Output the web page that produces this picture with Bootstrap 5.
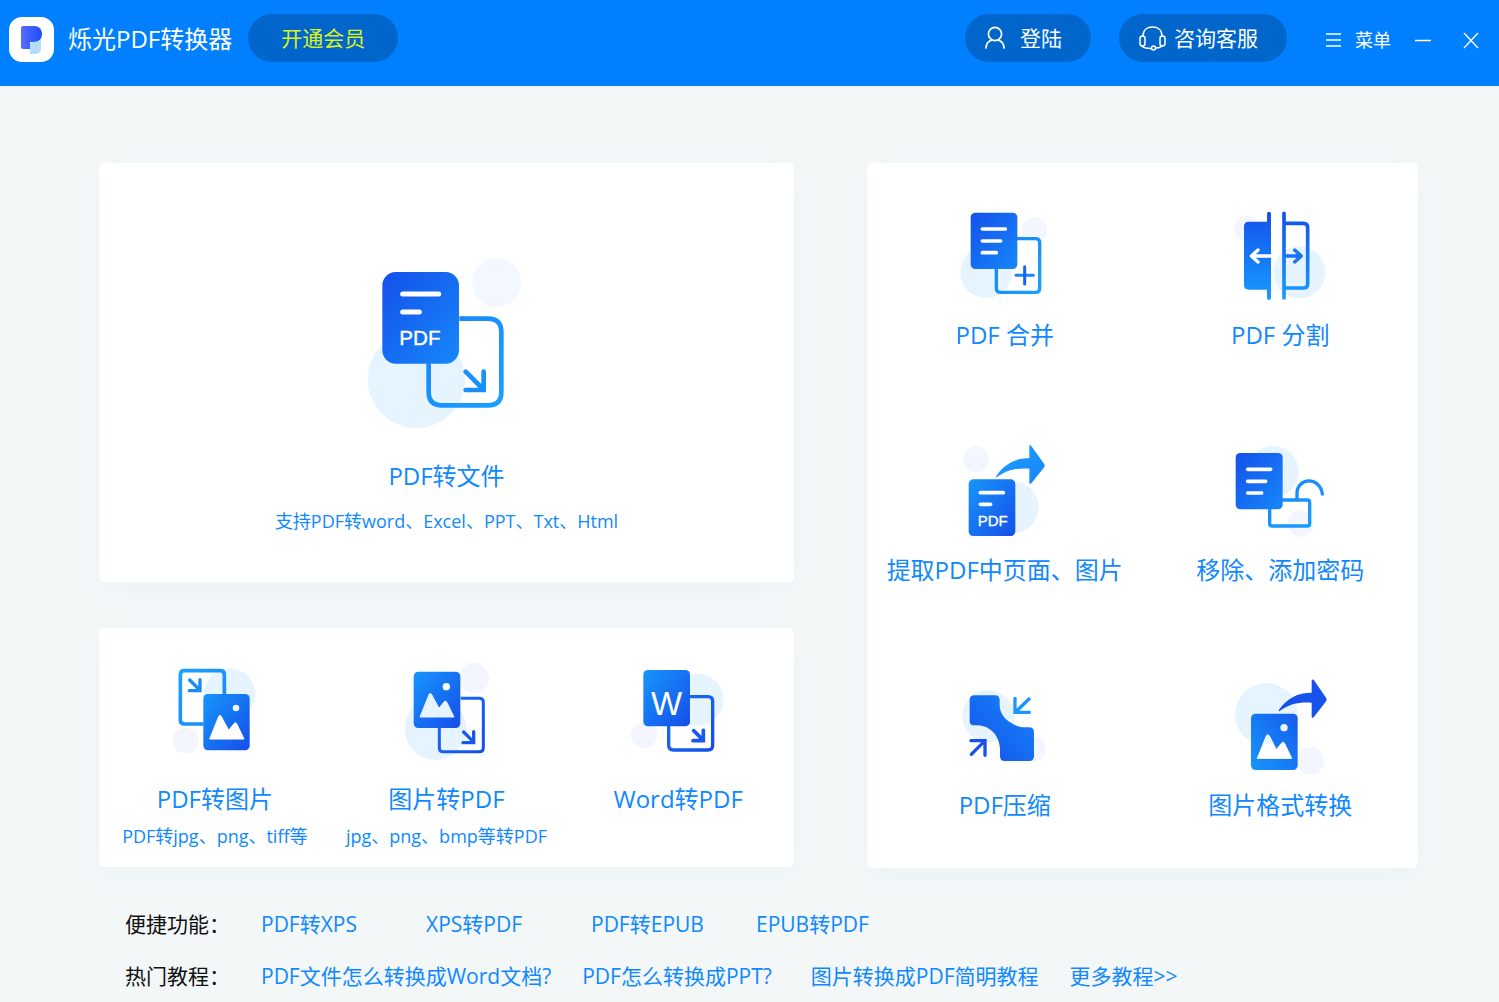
<!DOCTYPE html>
<html lang="zh-CN">
<head>
<meta charset="utf-8">
<meta name="viewport" content="width=device-width, initial-scale=1">
<title>烁光PDF转换器</title>
<link href="https://cdn.jsdelivr.net/npm/bootstrap@5.3.0/dist/css/bootstrap.min.css" rel="stylesheet">
<style>
  body { background: #f3f7f8; font-family: "Open Sans", "Noto Sans CJK SC", sans-serif; color: #111; }
  svg { display: block; flex: none; }
  a { text-decoration: none; color: #1088ff; }
  .topbar { background: #0080ff; height: 86px; padding: 14px 20px 0 9px; color: #fff; }
  .app-logo { margin-top: 3px; }
  .app-name { font-size: 24px; line-height: 50px; font-weight: 400; margin: 0 16px 0 14px; }
  .pill { background: #0066cc; height: 48px; border-radius: 24px; border: 0; color: #fff; font-size: 21px; line-height: 48px; padding: 0 0 0 20px; }
  .pill:hover { background: #005bb8; color: #fff; }
  .pill-vip, .pill-vip:hover { width: 150px; padding: 0; color: #d9f21c; }
  .pill-login { width: 126px; gap: 15px; }
  .pill-help { width: 168px; margin-left: 28px; }
  .win-btn { background: none; border: 0; color: #fff; padding: 0; font-size: 18px; line-height: 48px; margin-top: 2px; }
  .menu-btn { gap: 11px; margin-left: 37px; }
  .board { padding: 77px 81px 0 99px; gap: 73px; }
  .col-left { flex: 695 1 0; gap: 46px; }
  .col-right { flex: 551 1 0; }
  .panel { background: #fff; border-radius: 5px; box-shadow: 0 8px 24px rgba(200, 220, 240, .12); }
  .panel-main { padding: 77px 0 47px; }
  .panel-row { padding: 22px 0 17px; }
  .tile-title { font-size: 24px; line-height: 36px; white-space: nowrap; }
  .tile-note { font-size: 18px; line-height: 28px; white-space: nowrap; }
  .panel-main .tile-title { margin: 18px 0 13px; }
  .panel-row .tile-title { margin: 11px 0 5px; }
  .tool { padding: 32px 0 45px; }
  .tool .tile-title { margin-top: 2px; }
  .quick { padding: 40px 81px 10px 125px; font-size: 21px; line-height: 32px; }
  .quick-label { width: 136px; flex: none; }
  .quick-item { width: 165px; }
  .quick-links { gap: 31px; }
</style>
</head>
<body>
<svg width="0" height="0" class="position-absolute" aria-hidden="true">
  <defs>
    <linearGradient id="gDark" x1="0" y1="0" x2="1" y2="1"><stop offset="0" stop-color="#1550ea"/><stop offset="1" stop-color="#1688fa"/></linearGradient>
    <linearGradient id="gLight" x1="0" y1="0" x2="1" y2="1"><stop offset="0" stop-color="#1796fb"/><stop offset="1" stop-color="#154eea"/></linearGradient>
    <linearGradient id="gDown" x1="0" y1="0" x2="0" y2="1"><stop offset="0" stop-color="#1452ea"/><stop offset="1" stop-color="#189cff"/></linearGradient>
    <linearGradient id="gLine" x1="0" y1="0" x2="1" y2="1"><stop offset="0" stop-color="#1784fa"/><stop offset="1" stop-color="#1aa0ff"/></linearGradient>
    <linearGradient id="gLineTop" x1="0" y1="0" x2="1" y2="1"><stop offset="0" stop-color="#1ca2ff"/><stop offset="1" stop-color="#1784fa"/></linearGradient>
    <linearGradient id="gLineDeep" x1="0" y1="0" x2="1" y2="1"><stop offset="0" stop-color="#1870f6"/><stop offset="1" stop-color="#154eea"/></linearGradient>
    <linearGradient id="gUp" x1="0" y1="1" x2="1" y2="0"><stop offset="0" stop-color="#1796fb"/><stop offset="1" stop-color="#155cec"/></linearGradient>
    <linearGradient id="gPinch" x1="0" y1="1" x2="1" y2="0"><stop offset="0" stop-color="#1550ea"/><stop offset="1" stop-color="#1688fa"/></linearGradient>
    <linearGradient id="gLogo" x1="0" y1="0" x2="1" y2="0"><stop offset="0" stop-color="#5b6cff"/><stop offset="1" stop-color="#1b4dff"/></linearGradient>
  </defs>
</svg>

<header class="topbar d-flex align-items-start">
  <svg class="app-logo" width="45" height="45" viewBox="0 0 45 45" aria-hidden="true">
    <rect width="45" height="45" rx="13" fill="#fff"/>
    <path d="M12 11q0-2 2-2h11c5 0 8 3 8 8s-3 8-8 8h-4v7h-7q-2 0-2-2z" fill="url(#gLogo)"/>
    <path d="M21 28q0-3 3-3h2q4 0 6-3v9q0 6-6 6h-5z" fill="#b4dcff"/>
  </svg>
  <h1 class="app-name">烁光PDF转换器</h1>
  <button type="button" class="btn pill pill-vip">开通会员</button>

  <button type="button" class="btn pill pill-login ms-auto d-flex align-items-center">
    <svg width="20" height="24" viewBox="0 0 20 24" fill="none" stroke="#fff" stroke-width="1.7" stroke-linecap="round" aria-hidden="true"><circle cx="10" cy="8" r="6.6"/><path d="M1 22c0-5 3-7 6-8M19 22c0-5-3-7-6-8"/></svg>登陆</button>
  <button type="button" class="btn pill pill-help d-flex align-items-center gap-2">
    <svg width="27" height="26" viewBox="0 0 27 26" fill="none" stroke="#fff" stroke-width="1.5" stroke-linecap="round" aria-hidden="true"><path d="M4 11C4 5 8 2 13.500 2S23 5 23 11"/><rect x="1" y="11" width="5" height="10" rx="2.500"/><rect x="21" y="11" width="5" height="10" rx="2.500"/><path d="M3 21q2 2.500 9 2.500M17 23q4 0 6-2"/><circle cx="14.500" cy="23" r="2"/></svg>咨询客服</button>
  <button type="button" class="win-btn menu-btn d-flex align-items-center me-4">
    <svg width="20" height="16" viewBox="0 0 20 16" stroke="#fff" stroke-width="1.500" aria-hidden="true"><path d="M2 2h15M2 8h15M2 14h15"/></svg>菜单</button>
  <button type="button" class="win-btn" aria-label="最小化"><svg width="16" height="48" viewBox="0 0 16 48" stroke="#fff" stroke-width="1.500" aria-hidden="true"><path d="M0 24.500h16"/></svg></button>
  <button type="button" class="win-btn ms-4 ps-2" aria-label="关闭"><svg width="16" height="48" viewBox="0 0 16 48" stroke="#fff" stroke-width="1.400" aria-hidden="true"><path d="M1 17l14 15M15 17L1 32"/></svg></button>
</header>

<main class="board d-flex align-items-stretch">
  <div class="col-left d-flex flex-column">
    <a href="#" class="panel panel-main d-flex flex-column align-items-center">
      <svg width="200" height="200" viewBox="-9 0 600 600" aria-hidden="true">
        <circle cx="199" cy="418" r="146" fill="#e5f4ff"/><circle cx="440" cy="128" r="73" fill="#f3f7ff"/>
        <path d="M328 236h86q40 0 40 40v180q0 40-40 40H276q-40 0-40-40v-86" fill="none" stroke="url(#gLine)" stroke-width="14"/>
        <rect x="97" y="96" width="230" height="275" rx="40" fill="url(#gDark)"/>
        <path d="M158 162h108M158 216h50" stroke="#fff" stroke-width="15" stroke-linecap="round"/>
        <text x="148" y="315" font-family="Liberation Sans, sans-serif" font-size="62" fill="#fff" stroke="#fff" stroke-width="1">PDF</text>
        <path d="M347 395l52 52M401 395v55h-54" fill="none" stroke="#1890fc" stroke-width="14" stroke-linecap="round"/>
      </svg>
      <span class="tile-title">PDF转文件</span>
      <span class="tile-note">支持PDF转word、Excel、PPT、Txt、Html</span>
    </a>
    <div class="panel panel-row d-flex">
      <a href="#" class="col-4 d-flex flex-column align-items-center">
        <svg width="120" height="120" viewBox="14 0 360 360" aria-hidden="true">
          <circle cx="238" cy="132" r="77" fill="#e5f4ff"/><circle cx="106" cy="272" r="39" fill="#f3f5ff"/>
          <path d="M160 222H102q-12 0-12-12V74q0-12 12-12h108q12 0 12 12v60" fill="none" stroke="url(#gLineTop)" stroke-width="11"/>
          <path d="M118 90l30 30M149 89v33h-32" fill="none" stroke="#188afa" stroke-width="10" stroke-linecap="round"/>
          <rect x="159" y="132" width="139" height="169" rx="14" fill="url(#gLight)"/>
          <circle cx="257" cy="174" r="10" fill="#e5f4ff"/>
          <path d="M178 267l27-67q4-9 8 0l22 41 16-20q4-6 8 0l22 46z" fill="#fff" stroke="#fff" stroke-width="3" stroke-linejoin="round"/>
        </svg>
        <span class="tile-title">PDF转图片</span>
        <span class="tile-note">PDF转jpg、png、tiff等</span>
      </a>
      <a href="#" class="col-4 d-flex flex-column align-items-center">
        <svg width="120" height="120" viewBox="708 0 360 360" aria-hidden="true">
          <circle cx="857" cy="237" r="93" fill="#e5f4ff"/><circle cx="972" cy="84" r="45" fill="#f3f5ff"/>
          <path d="M932 145h56q12 0 12 12v136q0 12-12 12H880q-12 0-12-12v-60" fill="none" stroke="url(#gLineDeep)" stroke-width="9"/>
          <rect x="791" y="65" width="140" height="169" rx="14" fill="url(#gLight)"/>
          <circle cx="889" cy="110" r="11" fill="#fff"/>
          <path d="M810 201l27-67q4-9 8 0l22 41 15-19q4-6 8 0l22 45z" fill="#e5f4ff" stroke="#e5f4ff" stroke-width="3" stroke-linejoin="round"/>
          <path d="M941 246l28 28M971 245v33h-32" fill="none" stroke="#1758ed" stroke-width="10" stroke-linecap="round"/>
        </svg>
        <span class="tile-title">图片转PDF</span>
        <span class="tile-note">jpg、png、bmp等转PDF</span>
      </a>
      <a href="#" class="col-4 d-flex flex-column align-items-center">
        <svg width="120" height="120" viewBox="-6 0 360 360" aria-hidden="true">
          <circle cx="232" cy="149" r="78" fill="#e5f4ff"/><circle cx="72" cy="255" r="39" fill="#f3f5ff"/>
          <path d="M210 140h54q14 0 14 14v132q0 14-14 14H160q-14 0-14-14v-58" fill="none" stroke="url(#gLineDeep)" stroke-width="10"/>
          <rect x="70" y="60" width="140" height="169" rx="14" fill="url(#gLight)"/>
          <text x="93" y="195" font-family="Liberation Sans, sans-serif" font-size="99" fill="#fff">W</text>
          <path d="M221 242l28 28M250 241v31h-31" fill="none" stroke="#1758ed" stroke-width="11" stroke-linecap="round"/>
        </svg>
        <span class="tile-title">Word转PDF</span>
      </a>
    </div>
  </div>

  <div class="col-right panel d-flex flex-wrap">
    <a href="#" class="col-6 tool d-flex flex-column align-items-center">
      <svg width="120" height="120" viewBox="14 -15 360 360" aria-hidden="true">
        <circle cx="137" cy="217" r="77" fill="#e5f4ff"/><circle cx="282" cy="89" r="38" fill="#f3f5ff"/>
        <path d="M230 116h56q12 0 12 12v136q0 13-12 13H180q-12 0-12-13v-60" fill="none" stroke="url(#gLine)" stroke-width="10"/>
        <rect x="91" y="38" width="140" height="169" rx="14" fill="url(#gDark)"/>
        <path d="M126 87h69M126 123h55M126 158h42" stroke="#fff" stroke-width="11" stroke-linecap="round"/>
        <path d="M227 226h52" stroke="#1a84f8" stroke-width="9" stroke-linecap="round"/><path d="M253 200v52" stroke="#1762ef" stroke-width="9" stroke-linecap="round"/>
      </svg>
      <span class="tile-title">PDF 合并</span>
    </a>
    <a href="#" class="col-6 tool d-flex flex-column align-items-center">
      <svg width="120" height="120" viewBox="838 -15 360 360" aria-hidden="true">
        <circle cx="1076" cy="217" r="78" fill="#e5f4ff"/><circle cx="918" cy="86" r="38" fill="#f3f5ff"/>
        <path d="M924 65h55V41q0-6 6-6t6 6v253q0 6-6 6t-6-6v-25h-55q-14 0-14-14V79q0-14 14-14z" fill="url(#gDown)"/>
        <path d="M1030 40v254M1030 70h58q13 0 13 13v168q0 13-13 13h-58" fill="none" stroke="url(#gDown)" stroke-width="11" stroke-linecap="round"/>
        <path d="M991 168h-58M952 150l-20 18 20 18" fill="none" stroke="#fff" stroke-width="10" stroke-linecap="round" stroke-linejoin="round"/>
        <path d="M1034 168h48M1062 150l20 18-20 18" fill="none" stroke="#1775f5" stroke-width="10" stroke-linecap="round" stroke-linejoin="round"/>
      </svg>
      <span class="tile-title">PDF 分割</span>
    </a>
    <a href="#" class="col-6 tool d-flex flex-column align-items-center">
      <svg width="120" height="120" viewBox="14 0 360 360" aria-hidden="true">
        <circle cx="217" cy="232" r="78" fill="#e5f4ff"/><circle cx="107" cy="88" r="39" fill="#f3f5ff"/>
        <rect x="85" y="148" width="140" height="170" rx="14" fill="url(#gLight)"/>
        <path d="M120 188h69M120 223h31" stroke="#fff" stroke-width="11" stroke-linecap="round"/>
        <text x="112" y="287" font-family="Liberation Sans, sans-serif" font-size="45" fill="#fff" stroke="#fff" stroke-width="1">PDF</text>
        <path d="M167 139c25-37 57-54 100-54V49q0-7 6-1l39 55q2 4 0 8l-39 49q-5 4-6-2v-42c-39-2-65 3-97 25q-3 2-3-2z" fill="url(#gLineTop)"/>
      </svg>
      <span class="tile-title">提取PDF中页面、图片</span>
    </a>
    <a href="#" class="col-6 tool d-flex flex-column align-items-center">
      <svg width="120" height="120" viewBox="838 0 360 360" aria-hidden="true">
        <circle cx="997" cy="125" r="77" fill="#e5f4ff"/><circle cx="1080" cy="281" r="39" fill="#f3f5ff"/>
        <path d="M1024 210h76q7 0 7 7v64q0 7-7 7H995q-8 0-8-7v-45M1069 209v-18c0-50 70-52 76 1" fill="none" stroke="url(#gLine)" stroke-width="10" stroke-linecap="round"/>
        <rect x="885" y="69" width="141" height="169" rx="14" fill="url(#gDark)"/>
        <path d="M921 118h69M921 154h54M921 189h42" stroke="#fff" stroke-width="11" stroke-linecap="round"/>
      </svg>
      <span class="tile-title">移除、添加密码</span>
    </a>
    <a href="#" class="col-6 tool d-flex flex-column align-items-center">
      <svg width="120" height="120" viewBox="14 -15 360 360" aria-hidden="true">
        <circle cx="144" cy="138" r="78" fill="#e5f4ff"/><circle cx="278" cy="237" r="38" fill="#f3f5ff"/>
        <path d="M102 76h62q14 0 14 14v16q2 48 66 66h22q15 0 15 15v72q0 14-15 14h-73q-14 0-14-14v-23c-2-40-30-68-66-70h-11q-14 0-14-14V90q0-14 14-14z" fill="url(#gPinch)"/>
        <path d="M266 87l-39 38M224 85v42h43" fill="none" stroke="#1d96fc" stroke-width="10" stroke-linecap="round"/>
        <path d="M93 253l38-38M92 212h42v44" fill="none" stroke="#1850e8" stroke-width="10" stroke-linecap="round"/>
      </svg>
      <span class="tile-title">PDF压缩</span>
    </a>
    <a href="#" class="col-6 tool d-flex flex-column align-items-center">
      <svg width="120" height="120" viewBox="838 -15 360 360" aria-hidden="true">
        <circle cx="977" cy="133" r="94" fill="#e5f4ff"/><circle cx="1109" cy="273" r="41" fill="#f3f5ff"/>
        <rect x="931" y="131" width="140" height="169" rx="14" fill="url(#gUp)"/>
        <circle cx="1030" cy="173" r="11" fill="#e5f4ff"/>
        <path d="M950 265l27-67q4-8 9 0l21 41 16-20q4-6 8 0l22 46z" fill="#fff" stroke="#fff" stroke-width="3" stroke-linejoin="round"/>
        <path d="M968 223l10-25q4-8 9 0l13 25z" fill="#e5f4ff"/>
        <path d="M1014 121c25-37 57-53 99-53V32q1-7 7-1l37 54q2 4 0 8l-38 49q-5 4-6-2V98c-39-2-65 3-96 25q-3 2-3-2z" fill="#1652eb"/>
      </svg>
      <span class="tile-title">图片格式转换</span>
    </a>
  </div>
</main>

<footer class="quick d-flex flex-column">
  <div class="d-flex">
    <span class="quick-label">便捷功能：</span>
    <a href="#" class="quick-item">PDF转XPS</a>
    <a href="#" class="quick-item">XPS转PDF</a>
    <a href="#" class="quick-item">PDF转EPUB</a>
    <a href="#" class="quick-item">EPUB转PDF</a>
  </div>
  <div class="d-flex mt-3 pt-1">
    <span class="quick-label">热门教程：</span>
    <div class="quick-links d-flex">
      <a href="#">PDF文件怎么转换成Word文档?</a>
      <a href="#" class="me-2">PDF怎么转换成PPT?</a>
      <a href="#">图片转换成PDF简明教程</a>
      <a href="#">更多教程&gt;&gt;</a>
    </div>
  </div>
</footer>
<script src="https://cdn.jsdelivr.net/npm/bootstrap@5.3.0/dist/js/bootstrap.bundle.min.js"></script>
</body>
</html>
